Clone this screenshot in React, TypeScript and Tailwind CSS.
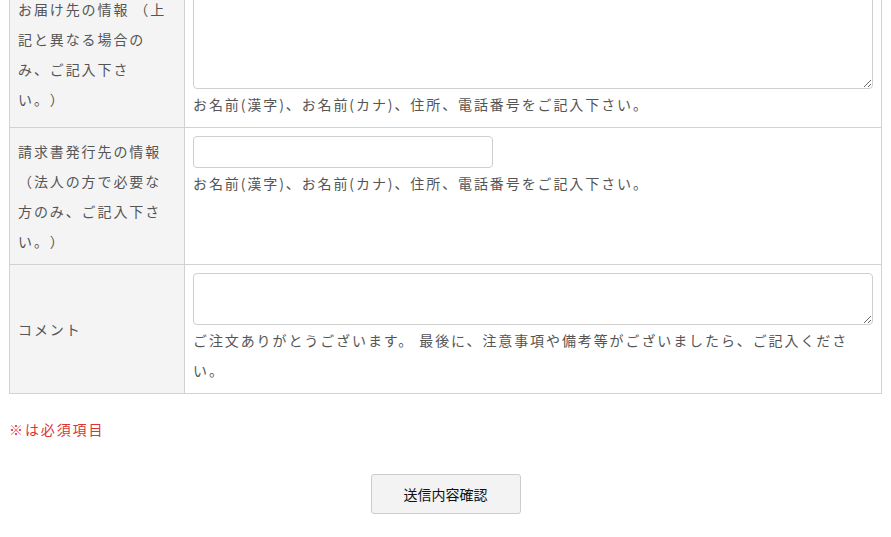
import React from "react";

export default function App() {
  const labelCls =
    "w-[175px] bg-[#f4f4f4] border border-[#d2d2d2] pl-[8px] pr-[8px] py-[8px] align-middle text-left font-normal";
  const cellCls = "border border-[#d2d2d2] px-[8px] py-[8px] align-top";
  return (
    <div className="min-h-[537px] bg-white font-['Noto_Sans_CJK_JP','Noto_Sans',sans-serif] text-[14px] leading-[30px] tracking-[1.9px] text-[#555] [text-spacing-trim:space-all]">
      <div className="px-[9px] -mt-[20px]">
        <table className="w-full border-collapse table-fixed">
          <tbody>
            <tr>
              <th className={labelCls}>
                <div className="w-[152px]">お届け先の情報 （上記と異なる場合のみ、ご記入下さい。）</div>
              </th>
              <td className={cellCls}>
                <textarea className="block w-full h-[100px] border border-[#cfcfcf] rounded-[4px] bg-white" />
                <div>お名前(漢字)、お名前(カナ)、住所、電話番号をご記入下さい。</div>
              </td>
            </tr>
            <tr>
              <th className={labelCls}>
                <div className="w-[152px]">請求書発行先の情報（法人の方で必要な方のみ、ご記入下さい。）</div>
              </th>
              <td className={cellCls}>
                <input
                  type="text"
                  className="block w-[300px] h-[32px] border border-[#cfcfcf] rounded-[4px] bg-white"
                />
                <div>お名前(漢字)、お名前(カナ)、住所、電話番号をご記入下さい。</div>
              </td>
            </tr>
            <tr>
              <th className={labelCls}>
                <div className="w-[152px]">コメント</div>
              </th>
              <td className={cellCls}>
                <textarea className="block w-full h-[52px] border border-[#cfcfcf] rounded-[4px] bg-white" />
                <div>ご注文ありがとうございます。 最後に、注意事項や備考等がございましたら、ご記入ください。</div>
              </td>
            </tr>
          </tbody>
        </table>
        <p className="mt-[20px] text-[#dd3333]">※は必須項目</p>
        <div className="mt-[30px] flex justify-center">
          <button
            type="button"
            className="w-[150px] h-[40px] bg-[#f3f3f3] border border-[#cccccc] rounded-[3px] text-[14px] tracking-normal text-[#111] leading-none"
          >
            送信内容確認
          </button>
        </div>
      </div>
    </div>
  );
}
